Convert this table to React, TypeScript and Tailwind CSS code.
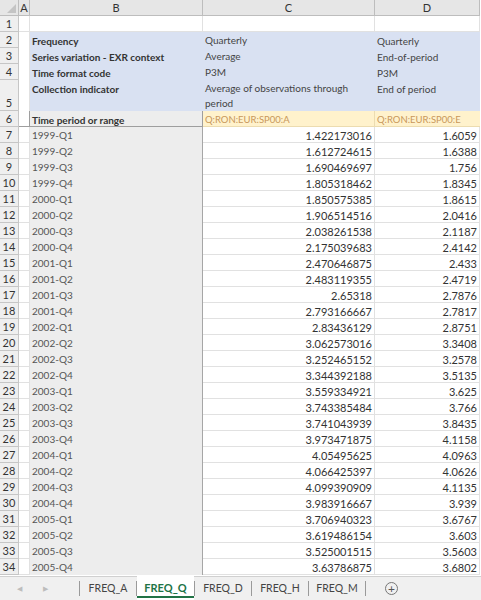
import React from 'react';

const data: [string, string, string][] = [
  ['1999-Q1', '1.422173016', '1.6059'],
  ['1999-Q2', '1.612724615', '1.6388'],
  ['1999-Q3', '1.690469697', '1.756'],
  ['1999-Q4', '1.805318462', '1.8345'],
  ['2000-Q1', '1.850575385', '1.8615'],
  ['2000-Q2', '1.906514516', '2.0416'],
  ['2000-Q3', '2.038261538', '2.1187'],
  ['2000-Q4', '2.175039683', '2.4142'],
  ['2001-Q1', '2.470646875', '2.433'],
  ['2001-Q2', '2.483119355', '2.4719'],
  ['2001-Q3', '2.65318', '2.7876'],
  ['2001-Q4', '2.793166667', '2.7817'],
  ['2002-Q1', '2.83436129', '2.8751'],
  ['2002-Q2', '3.062573016', '3.3408'],
  ['2002-Q3', '3.252465152', '3.2578'],
  ['2002-Q4', '3.344392188', '3.5135'],
  ['2003-Q1', '3.559334921', '3.625'],
  ['2003-Q2', '3.743385484', '3.766'],
  ['2003-Q3', '3.741043939', '3.8435'],
  ['2003-Q4', '3.973471875', '4.1158'],
  ['2004-Q1', '4.05495625', '4.0963'],
  ['2004-Q2', '4.066425397', '4.0626'],
  ['2004-Q3', '4.099390909', '4.1135'],
  ['2004-Q4', '3.983916667', '3.939'],
  ['2005-Q1', '3.706940323', '3.6767'],
  ['2005-Q2', '3.619486154', '3.603'],
  ['2005-Q3', '3.525001515', '3.5603'],
  ['2005-Q4', '3.63786875', '3.6802'],
];

const meta: [string, string, string][] = [
  ['Frequency', 'Quarterly', 'Quarterly'],
  ['Series variation - EXR context', 'Average', 'End-of-period'],
  ['Time format code', 'P3M', 'P3M'],
  ['Collection indicator', 'Average of observations through period', 'End of period'],
];

const RowNum = ({ n, tall }: { n: number; tall?: boolean }) => (
  <div
    className={`${tall ? 'h-[31px]' : 'h-[16px]'} flex items-end justify-center pb-[2px] bg-[#efefef] border-r border-b border-[#c6c6c6] text-[11px] text-[#333]`}
  >
    {n}
  </div>
);

const tabs = ['FREQ_A', 'FREQ_Q', 'FREQ_D', 'FREQ_H', 'FREQ_M'];

export default function App() {
  return (
    <div className="w-[481px] h-[600px] bg-white overflow-hidden flex flex-col font-['Lato',sans-serif] text-[9.5px] text-[#333] leading-none">
      <div className="grid grid-cols-[19px_11px_173px_172px_105px] flex-1 content-start">
        {/* column headers */}
        <div className="h-[16px] bg-[#e6e6e6] border-r border-b border-[#bdbdbd] relative">
          <div className="absolute right-[2px] bottom-[2px] w-0 h-0 border-l-[9px] border-l-transparent border-b-[9px] border-b-[#c4c4c4]" />
        </div>
        {['A', 'B', 'C', 'D'].map((c) => (
          <div
            key={c}
            className="h-[16px] flex items-center justify-center bg-[#e6e6e6] border-r border-b border-[#bdbdbd] text-[11px] text-[#333]"
          >
            {c}
          </div>
        ))}

        {/* row 1 */}
        <RowNum n={1} />
        <div className="border-r border-b border-[#e1e1e1]" />
        <div className="border-r border-b border-[#e1e1e1]" />
        <div className="border-r border-b border-[#e1e1e1]" />
        <div className="border-r border-b border-[#e1e1e1]" />

        {/* metadata rows */}
        {meta.map(([label, c, d], i) => {
          const tall = i === 3;
          return (
            <React.Fragment key={label}>
              <RowNum n={i + 2} tall={tall} />
              <div className="border-r border-[#e1e1e1]" />
              <div className="bg-[#d9e1f2] pl-[2px] pt-[4px] font-bold text-[10px] text-[#333]">{label}</div>
              <div className="bg-[#d9e1f2] pl-[2px] pt-[4px] leading-[15px] text-[10px] text-[#444]">
                <span className="block -mt-[3px] pr-6">{c}</span>
              </div>
              <div className="bg-[#d9e1f2] pl-[2px] pt-[4px] text-[10px] text-[#444]">{d}</div>
            </React.Fragment>
          );
        })}

        {/* row 6 */}
        <RowNum n={6} />
        <div className="border-r border-b border-[#9e9e9e]" />
        <div className="bg-[#ededed] pl-[2px] pt-[4px] font-bold text-[10px] border-r border-b border-[#9e9e9e]">Time period or range</div>
        <div className="bg-[#fff2cc] pl-[2px] pt-[4px] text-[#c8975a] border-r border-b border-[#ecdcb0]">Q:RON:EUR:SP00:A</div>
        <div className="bg-[#fff2cc] pl-[2px] pt-[4px] text-[#c8975a] border-b border-[#ecdcb0]">Q:RON:EUR:SP00:E</div>

        {data.map(([p, c, d], i) => (
          <React.Fragment key={p}>
            <RowNum n={i + 7} />
            <div className="border-r border-b border-[#e1e1e1]" />
            <div className="bg-[#ededed] pl-[2px] pt-[3px] text-[10px] text-[#555] border-r border-[#a6a6a6]">{p}</div>
            <div className="text-right pr-[2px] pt-[3px] text-[11px] border-r border-b border-[#e1e1e1]">{c}</div>
            <div className="text-right pr-[2px] pt-[3px] text-[11px] border-r border-b border-[#e1e1e1]">{d}</div>
          </React.Fragment>
        ))}
      </div>

      {/* sheet tabs */}
      <div className="h-[24px] shrink-0 bg-[#f0f0f0] border-t border-[#d0d0d0] flex items-stretch text-[10.5px] text-[#444]">
        <div className="w-[79px] flex items-center justify-around pl-[6px] pr-[20px] text-[7px] text-[#bdbdbd]">
          <span>◀</span>
          <span>▶</span>
        </div>
        <div className="w-px bg-[#9a9a9a] my-[4px]" />
        {tabs.map((t) => {
          const active = t === 'FREQ_Q';
          return (
            <React.Fragment key={t}>
              {active ? (
                <div className="w-[57px] -mt-px bg-white flex flex-col items-center justify-center relative">
                  <span className="font-bold text-[11px] text-[#217346] -mt-[2px]">{t}</span>
                  <div className="absolute bottom-[2px] left-0 right-0 h-[2px] bg-[#217346]" />
                </div>
              ) : (
                <div className="w-[56px] flex items-center justify-center">{t}</div>
              )}
              <div className="w-px bg-[#9a9a9a] my-[4px]" />
            </React.Fragment>
          );
        })}
        <div className="w-[32px] flex items-center justify-end">
          <span className="w-[13px] h-[13px] rounded-full border border-[#777] flex items-center justify-center text-[12px] leading-none text-[#555]">+</span>
        </div>
      </div>
    </div>
  );
}
